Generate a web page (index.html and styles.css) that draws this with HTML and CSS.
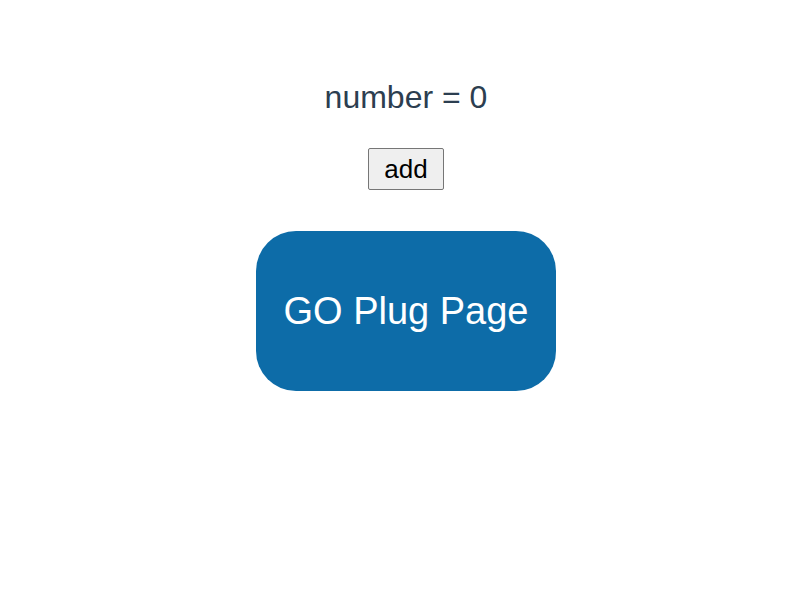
FILE: index.html
```html
<!DOCTYPE html>
<html>
<head>
<meta charset="utf-8">
<link rel="stylesheet" href="styles.css">
</head>
<body>
<div class="app">
  <p class="count">number = 0</p>
  <button class="add">add</button>
  <div class="go">GO Plug Page</div>
</div>
</body>
</html>
```
FILE: styles.css
```css
html, body { margin: 0; padding: 0; background: #fff; }
.app {
  font-family: "Liberation Sans", Arial, sans-serif;
  color: #2c3e50;
  display: flex;
  flex-direction: column;
  align-items: center;
  padding-top: 77px;
  padding-left: 16px;
}
.count {
  margin: 0;
  font-size: 32px;
  line-height: 40px;
}
.add {
  margin-top: 31px;
  width: 76px;
  height: 42px;
  font-family: "Liberation Sans", Arial, sans-serif;
  font-size: 26px;
  color: #000;
  background: #efefef;
  border: 1px solid #767676;
  border-radius: 2px;
  padding: 0;
}
.go {
  margin-top: 41px;
  width: 300px;
  height: 160px;
  border-radius: 40px;
  background: #0d6ca8;
  color: #fff;
  font-size: 38px;
  display: flex;
  align-items: center;
  justify-content: center;
}
```
